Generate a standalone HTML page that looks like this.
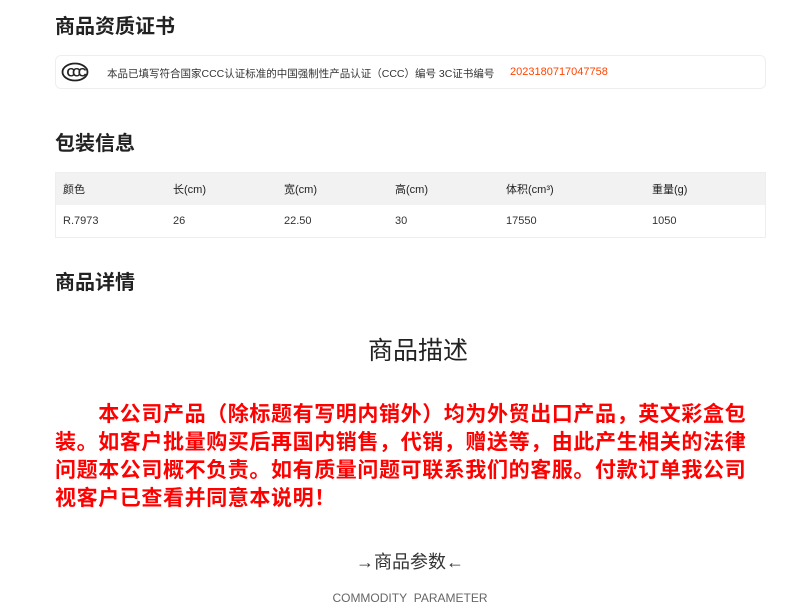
<!DOCTYPE html>
<html><head><meta charset="utf-8"><style>
body{margin:0;background:#fff;font-family:"Liberation Sans","Noto Sans CJK SC",sans-serif;color:#333;width:792px;height:614px;overflow:hidden;position:relative}
.a{position:absolute}
h2{position:absolute;margin:0;font-size:20px;font-weight:bold;color:#222;left:55px}
.card{left:55px;top:55px;width:709px;height:32px;border:1px solid #eee;border-radius:6px}
table{position:absolute;left:55px;top:172px;width:711px;border-collapse:collapse;font-size:11px;color:#333;border:1px solid #eee}
td{height:32px;padding:0 0 0 7px}
tr.h td{background:#f2f2f2;color:#222}
.red{left:55px;top:401px;width:702px;color:#f00;font-weight:bold;font-size:21px;line-height:28px;letter-spacing:0.6px}
</style></head><body>
<h2 style="top:10px">商品资质证书</h2>
<div class="a card">
<svg class="a" style="left:5px;top:6px" width="28" height="20" viewBox="0 0 28 20"><ellipse cx="14" cy="10" rx="12.5" ry="8.5" fill="none" stroke="#222" stroke-width="1.8"/><text x="14" y="14.5" text-anchor="middle" font-size="12" font-weight="bold" font-family="Liberation Sans" fill="#222" letter-spacing="-3">CCC</text></svg>
<div class="a" style="left:51px;top:10px;font-size:10.5px;color:#333;white-space:nowrap">本品已填写符合国家CCC认证标准的中国强制性产品认证（CCC）编号 3C证书编号</div>
<div class="a" style="left:454px;top:10px;font-size:11px;color:#f40;">2023180717047758</div>
</div>
<h2 style="top:127px">包装信息</h2>
<table>
<tr class="h"><td style="width:103px">颜色</td><td style="width:104px">长(cm)</td><td style="width:104px">宽(cm)</td><td style="width:104px">高(cm)</td><td style="width:139px">体积(cm³)</td><td>重量(g)</td></tr>
<tr><td>R.7973</td><td>26</td><td>22.50</td><td>30</td><td>17550</td><td>1050</td></tr>
</table>
<h2 style="top:266px">商品详情</h2>
<div class="a" style="left:0;width:836px;text-align:center;top:331px;font-size:25px;color:#222">商品描述</div>
<div class="a red">　　本公司产品（除标题有写明内销外）均为外贸出口产品，英文彩盒包装。如客户批量购买后再国内销售，代销，赠送等，由此产生相关的法律问题本公司概不负责。如有质量问题可联系我们的客服。付款订单我公司视客户已查看并同意本说明！</div>
<div class="a" style="left:0;width:820px;text-align:center;top:548px;font-size:18px;color:#333">→商品参数←</div>
<div class="a" style="left:0;width:820px;text-align:center;top:591px;font-size:12px;color:#666">COMMODITY&nbsp; PARAMETER</div>
</body></html>
